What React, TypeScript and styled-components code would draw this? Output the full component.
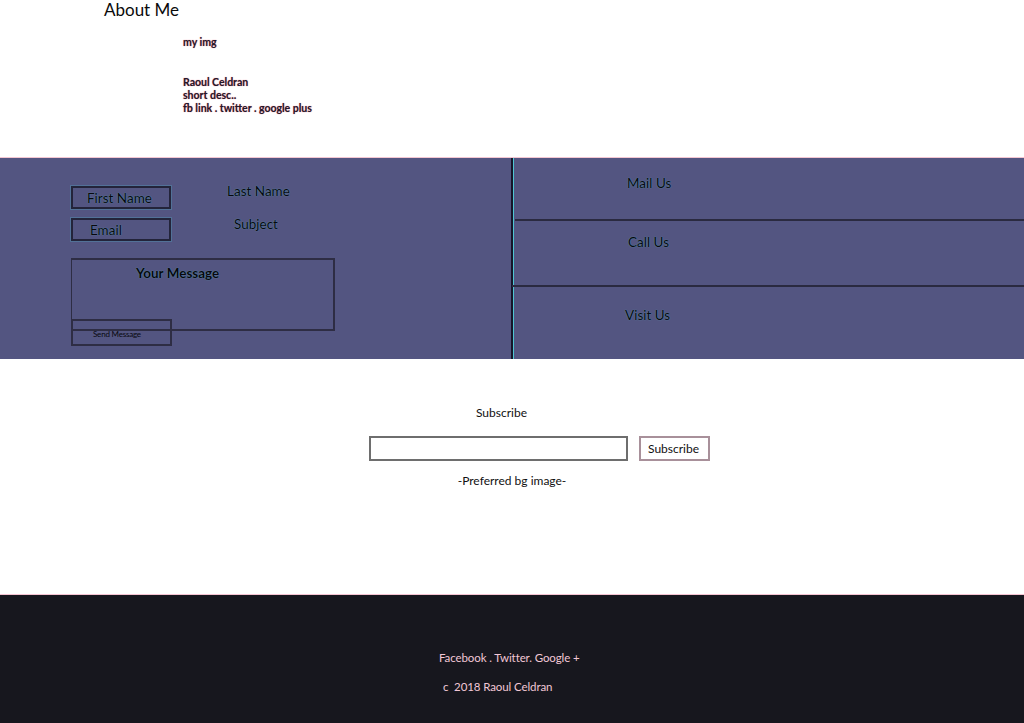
import React from "react";
import styled, { createGlobalStyle } from "styled-components";

const Global = createGlobalStyle`
  html, body { margin: 0; padding: 0; background: #ffffff; }
  body { font-family: Lato, "Open Sans", sans-serif; color: #111; }
`;

const Page = styled.div`
  width: 1024px;
  display: flex;
  flex-direction: column;
`;

const About = styled.section`
  height: 157px;
  padding-left: 104px;
  box-sizing: border-box;
`;

const Title = styled.h1`
  margin: 0;
  font-size: 17px;
  line-height: 20px;
  font-weight: 400;
  color: #0a0a0a;
`;

const AboutBody = styled.div`
  padding-left: 79px;
  padding-top: 16px;
  display: flex;
  flex-direction: column;
  gap: 27px;
`;

const Small = styled.div`
  font-size: 10.5px;
  line-height: 13px;
  font-weight: 700;
  color: #221a2a;
  text-shadow: 0 0 1px rgba(230, 80, 110, 0.9);
`;

const Contact = styled.section`
  height: 202px;
  background: #535581;
  border-top: 1px solid #f4c6d2;
  display: grid;
  grid-template-columns: 513px 1fr;
  box-sizing: border-box;
`;

const FormPanel = styled.div`
  border-right: 2px solid #15172a;
  box-shadow: 1px 0 0 #4fc6d4;
  padding: 28px 0 0 71px;
  display: flex;
  flex-direction: column;
`;

const FieldRow = styled.div<{ $gap: number; $lift: number }>`
  display: flex;
  align-items: flex-start;
  gap: ${(p) => p.$gap}px;
  margin-bottom: 9px;
  & > span {
    margin-top: ${(p) => p.$lift}px;
  }
`;

const InputBox = styled.div<{ $pad: number }>`
  width: 100px;
  height: 23px;
  box-sizing: border-box;
  border: 2px solid #23243a;
  box-shadow: 0 0 0 1px rgba(80, 200, 220, 0.25);
  padding-left: ${(p) => p.$pad}px;
  font-size: 13.5px;
  line-height: 20px;
  color: #08080e;
  text-shadow: 0 0 1px rgba(100, 220, 230, 0.7);
`;

const Label = styled.span`
  font-size: 13.5px;
  line-height: 16px;
  color: #08080e;
  text-shadow: 0 0 1px rgba(100, 220, 230, 0.7);
`;

const MessageBox = styled.div`
  margin-top: 8px;
  width: 264px;
  height: 73px;
  box-sizing: border-box;
  border: 2px solid #2e2d44;
  border-left-width: 1px;
  padding: 4px 0 0 64px;
  font-size: 13.5px;
  font-weight: 700;
  line-height: 18px;
  color: #08080e;
  text-shadow: 0 0 1px rgba(100, 220, 230, 0.7);
`;

const SendButton = styled.div`
  margin-top: -12px;
  width: 101px;
  height: 27px;
  box-sizing: border-box;
  border: 2px solid #2e2d44;
  font-size: 8px;
  line-height: 26px;
  padding-left: 20px;
  color: #08080e;
  letter-spacing: -0.2px;
`;

const InfoPanel = styled.div`
  display: grid;
  grid-template-rows: 63px 66px 1fr;
`;

const InfoRow = styled.div<{ $top: number; $left: number; $line: boolean; $inset: number }>`
  padding-top: ${(p) => p.$top}px;
  padding-left: ${(p) => p.$left}px;
  font-size: 13.5px;
  line-height: 16px;
  color: #08080e;
  text-shadow: 0 0 1px rgba(100, 220, 230, 0.7);
  box-sizing: border-box;
  border-bottom: ${(p) => (p.$line ? "2px solid #2a2a40" : "none")};
  margin-left: ${(p) => p.$inset}px;
`;

const SubscribeSection = styled.section`
  height: 235px;
  padding-top: 46px;
  box-sizing: border-box;
  display: flex;
  flex-direction: column;
`;

const SubTitle = styled.div`
  text-align: center;
  width: 1003px;
  font-size: 12px;
  line-height: 16px;
  color: #111;
`;

const SubRow = styled.div`
  display: flex;
  gap: 11px;
  padding-left: 369px;
  margin-top: 15px;
`;

const EmailInput = styled.div`
  width: 259px;
  height: 25px;
  box-sizing: border-box;
  border: 2px solid #6e6e6e;
`;

const SubButton = styled.div`
  width: 71px;
  height: 25px;
  box-sizing: border-box;
  border: 2px solid #a8909a;
  font-size: 12px;
  line-height: 21px;
  padding-left: 7px;
  color: #111;
`;

const Note = styled.div`
  text-align: center;
  width: 1024px;
  margin-top: 12px;
  font-size: 12px;
  line-height: 16px;
  color: #111;
`;

const Footer = styled.footer`
  height: 129px;
  background: #17171e;
  border-top: 1px solid #f5c4d2;
  box-sizing: border-box;
  padding: 55px 0 0 439px;
  display: flex;
  flex-direction: column;
  gap: 13px;
`;

const FooterText = styled.div<{ $indent: number }>`
  font-size: 11.5px;
  line-height: 16px;
  letter-spacing: -0.1px;
  color: #f2c7d6;
  padding-left: ${(p) => p.$indent}px;
  white-space: pre;
`;

export default function App() {
  return (
    <Page>
      <Global />
      <About>
        <Title>About Me</Title>
        <AboutBody>
          <Small>my img</Small>
          <div>
            <Small>Raoul Celdran</Small>
            <Small>short desc..</Small>
            <Small>fb link . twitter . google plus</Small>
          </div>
        </AboutBody>
      </About>
      <Contact>
        <FormPanel>
          <FieldRow $gap={56} $lift={-3}>
            <InputBox $pad={14}>First Name</InputBox>
            <Label>Last Name</Label>
          </FieldRow>
          <FieldRow $gap={63} $lift={-2}>
            <InputBox $pad={17}>Email</InputBox>
            <Label>Subject</Label>
          </FieldRow>
          <MessageBox>Your Message</MessageBox>
          <SendButton>Send Message</SendButton>
        </FormPanel>
        <InfoPanel>
          <InfoRow $top={17} $left={112} $line={true} $inset={2}>Mail Us</InfoRow>
          <InfoRow $top={13} $left={116} $line={true} $inset={-1}>Call Us</InfoRow>
          <InfoRow $top={20} $left={112} $line={false} $inset={0}>Visit Us</InfoRow>
        </InfoPanel>
      </Contact>
      <SubscribeSection>
        <SubTitle>Subscribe</SubTitle>
        <SubRow>
          <EmailInput />
          <SubButton>Subscribe</SubButton>
        </SubRow>
        <Note>-Preferred bg image-</Note>
      </SubscribeSection>
      <Footer>
        <FooterText $indent={0}>Facebook . Twitter. Google +</FooterText>
        <FooterText $indent={4}>{"c  2018 Raoul Celdran"}</FooterText>
      </Footer>
    </Page>
  );
}
